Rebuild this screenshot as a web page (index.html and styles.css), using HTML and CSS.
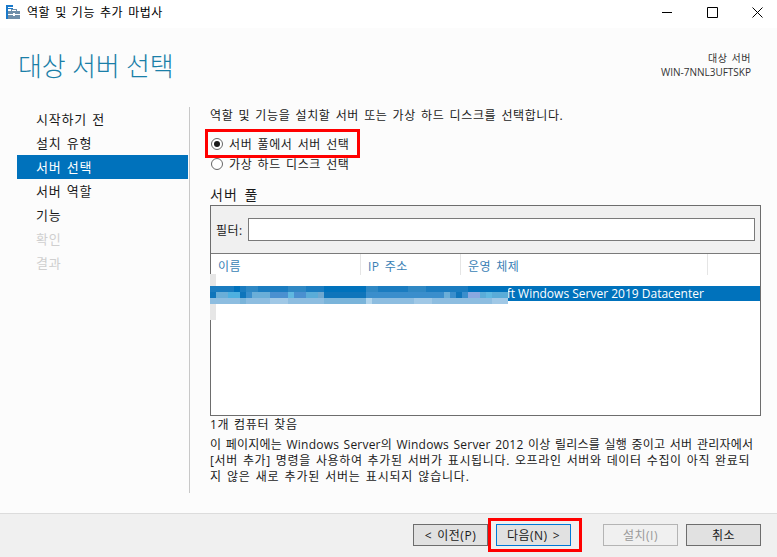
FILE: index.html
```html
<!DOCTYPE html>
<html lang="ko">
<head>
<meta charset="utf-8">
<title>역할 및 기능 추가 마법사</title>
<link rel="stylesheet" href="styles.css">
</head>
<body>
<div class="window">
  <header class="titlebar">
    <svg class="app-icon" width="14" height="14" viewBox="0 0 14 14" shape-rendering="crispEdges"><path fill="#1979ca" d="M0 0h7v2H0zM0 2h2v12H0zM2 3h5v1H2z"/><path fill="#6f8ea8" d="M2 6h12v8H2z"/><path fill="#fff" d="M2 9h12v1H2zM7 8h2v3H7z"/><path fill="none" stroke="#6f8ea8" d="M5.500 6V4.500h5V6"/></svg>
    <span class="title">역할 및 기능 추가 마법사</span>
    <div class="controls">
      <svg width="11" height="11" viewBox="0 0 11 11"><path d="M0 5.500h10" stroke="#000" fill="none"/></svg>
      <svg width="11" height="11" viewBox="0 0 11 11"><path d="M.5.500h10v10H.5z" stroke="#000" fill="none"/></svg>
      <svg width="11" height="11" viewBox="0 0 11 11"><path d="M.5.500l10 10M10.500.500l-10 10" stroke="#000" fill="none"/></svg>
    </div>
  </header>
  <main class="content">
    <div class="banner">
      <h1>대상 서버 선택</h1>
      <div class="target"><div class="target-label">대상 서버</div><div>WIN-7NNL3UFTSKP</div></div>
    </div>
    <div class="columns">
      <nav class="steps">
        <div class="step">시작하기 전</div>
        <div class="step">설치 유형</div>
        <div class="step active">서버 선택</div>
        <div class="step">서버 역할</div>
        <div class="step">기능</div>
        <div class="step off">확인</div>
        <div class="step off">결과</div>
      </nav>
      <section class="main">
        <p class="intro">역할 및 기능을 설치할 서버 또는 가상 하드 디스크를 선택합니다.</p>
        <div class="radios">
          <div class="radio-row"><span class="radio on"></span>서버 풀에서 서버 선택</div>
          <div class="radio-row"><span class="radio"></span>가상 하드 디스크 선택</div>
          <div class="mark mark-radio"></div>
        </div>
        <h2>서버 풀</h2>
        <div class="pool">
          <div class="filter"><label>필터:</label><div class="input"></div></div>
          <div class="thead">
            <div class="th c1">이름</div><div class="th c2">IP 주소</div><div class="th c3">운영 체제</div><div class="th c4"></div>
          </div>
          <div class="tbody">
            <div class="row"><span class="os">Microsoft Windows Server 2019 Datacenter</span></div>
            <svg class="mosaic" width="298" height="46" viewBox="0 0 298 46" shape-rendering="crispEdges">
              <rect x="0" y="0" width="6" height="46" fill="#e6e6e6"/>
              <rect x="0" y="12" width="298" height="6" fill="#1a7cc0"/>
              <path fill="#0072bc" d="M114 12h42v6h-42zM24 12h6v6h-6zM258 12h40v6h-40z"/>
              <path fill="#2f88c4" d="M78 12h18v6H78zM156 12h12v6h-12zM198 12h18v6h-18zM36 12h12v6H36z"/>
              <rect x="0" y="18" width="298" height="6" fill="#3a8ecc"/>
              <path fill="#0f75bb" d="M0 18h6v6H0zM30 18h6v6h-6zM114 18h42v6h-42zM246 18h6v6h-6z"/>
              <path fill="#6aaed8" d="M6 18h12v6H6zM42 18h18v6H42zM234 18h6v6h-6z"/>
              <path fill="#4eb0e0" d="M18 18h12v6H18z"/>
              <path fill="#4a90d0" d="M60 18h18v6H60zM84 18h12v6H84z"/>
              <path fill="#60b8e0" d="M78 18h6v6h-6zM276 18h6v6h-6z"/>
              <path fill="#5aacd8" d="M96 18h12v6H96zM270 18h6v6h-6zM282 18h16v6h-16z"/>
              <path fill="#6ea8d0" d="M108 18h6v6h-6z"/>
              <path fill="#8aa8e0" d="M258 18h12v6h-12z"/>
              <rect x="0" y="24" width="298" height="6" fill="#8dbde0"/>
              <path fill="#a0c8e6" d="M60 24h18v6H60zM204 24h18v6h-18zM282 24h16v6h-16z"/>
              <path fill="#7ab4da" d="M114 24h42v6h-42zM30 24h6v6h-6z"/>
              <path fill="#b0d4ec" d="M156 24h6v6h-6z"/>
            </svg>
          </div>
        </div>
        <div class="found">1개 컴퓨터 찾음</div>
        <p class="note">
          <span class="line line-1">이 페이지에는 Windows Server의 Windows Server 2012 이상 릴리스를 실행 중이고 서버 관리자에서</span>
          <span class="line line-2">[서버 추가] 명령을 사용하여 추가된 서버가 표시됩니다. 오프라인 서버와 데이터 수집이 아직 완료되</span>
          <span class="line line-3">지 않은 새로 추가된 서버는 표시되지 않습니다.</span>
        </p>
      </section>
    </div>
  </main>
  <footer class="footer">
    <button class="btn">&lt; 이전(P)</button>
    <button class="btn primary">다음(N) &gt;<span class="mark mark-btn"></span></button>
    <button class="btn disabled">설치(I)</button>
    <button class="btn">취소</button>
  </footer>
</div>
</body>
</html>
```
FILE: styles.css
```css
* { box-sizing: border-box; }
html, body { margin: 0; padding: 0; }
body { width: 777px; height: 557px; overflow: hidden; font-family: "Open Sans", "Noto Sans CJK KR", sans-serif; font-size: 12px; color: #1a1a1a; }
.window { width: 777px; height: 557px; display: flex; flex-direction: column; background: #fff; }
.titlebar { height: 28px; flex: none; display: flex; align-items: flex-start; padding: 5px 0 0 6px; background: #fff; }
.app-icon { flex: none; }
.title { margin: 0 0 0 7px; font-size: 12px; line-height: 15px; color: #000; letter-spacing: .5px; word-spacing: 1.5px; }
.controls { margin-left: auto; display: flex; gap: 34px; padding: 2px 14px 0 0; }
.controls svg { display: block; }
.content { flex: 1; background: #fcfcfc; display: flex; flex-direction: column; min-height: 0; }
.banner { height: 79px; flex: none; display: flex; justify-content: space-between; padding: 20px 26px 0 18px; }
h1 { margin: 0; font-size: 26px; line-height: 36px; font-weight: 300; color: #1a7fa8; letter-spacing: -.2px; }
.target { text-align: right; font-size: 10px; line-height: 14px; color: #333; padding-top: 3px; }
.target-label { letter-spacing: .5px; word-spacing: 1px; }
.columns { flex: 1; display: flex; min-height: 0; }
.steps { width: 171px; flex: none; margin: 0 1px 0 17px; }
.step { height: 24px; line-height: 24px; padding-left: 19px; font-size: 13px; letter-spacing: .8px; word-spacing: 1px; }
.step.active { background: #0072bc; color: #fff; }
.step.off { color: #cfcfcf; }
.main { width: 572px; margin-bottom: 20px; border-left: 1px solid #c8c8c8; padding: 1px 0 0 20px; display: flex; flex-direction: column; }
.intro { margin: 0; height: 24px; line-height: 16px; letter-spacing: .6px; word-spacing: 1.5px; }
.radios { position: relative; margin-top: 2px; }
.radio-row { height: 20px; display: flex; align-items: center; gap: 6px; letter-spacing: .6px; word-spacing: 1.5px; }
.radio { width: 12px; height: 12px; border: 1px solid #666; border-radius: 50%; background: #fff; margin-left: 1px; position: relative; flex: none; }
.radio.on::after { content: ""; position: absolute; left: 2px; top: 2px; width: 6px; height: 6px; border-radius: 50%; background: #1a1a1a; }
.mark { position: absolute; border: 3px solid #f00; pointer-events: none; }
.mark-radio { left: -5px; top: -5px; width: 155px; height: 29px; }
h2 { margin: 11px 0 0; font-size: 14px; line-height: 20px; font-weight: 400; height: 20px; letter-spacing: 1px; word-spacing: 2px; }
.pool { width: 551px; height: 211px; border: 1px solid #6d6d6d; display: flex; flex-direction: column; background: #fff; flex: none; }
.filter { height: 48px; flex: none; background: #f0f0f0; border-bottom: 1px solid #7a7a7a; display: flex; align-items: center; padding: 0 5px 0 5px; }
.filter label { width: 32px; flex: none; letter-spacing: .4px; }
.input { flex: 1; height: 23px; background: #fff; border: 1px solid #7a7a7a; }
.thead { height: 21px; flex: none; display: flex; }
.th { color: #3a7fb5; border-right: 1px solid #e5e5e5; padding-left: 7px; line-height: 25px; letter-spacing: .5px; word-spacing: 1.5px; }
.c1 { width: 150px; } .c2 { width: 100px; } .c3 { width: 247px; } .c4 { flex: 1; border-right: 0; }
.tbody { position: relative; flex: 1; padding-top: 11px; }
.row { height: 15px; background: #0072bc; color: #fff; line-height: 16px; padding-left: 251px; white-space: nowrap; }
.mosaic { position: absolute; left: -1px; top: -1px; }
.found { margin-top: 1px; line-height: 16px; height: 18px; letter-spacing: .7px; word-spacing: 1px; }
.note { margin: 2px 0 0; width: 548px; line-height: 16px; }
.line { display: block; height: 16px; white-space: nowrap; }
.line-1 { letter-spacing: .21px; word-spacing: 1.2px; }
.line-2 { letter-spacing: .65px; word-spacing: 1.2px; }
.line-3 { letter-spacing: .8px; word-spacing: 1.2px; }
.footer { height: 44px; flex: none; background: #f0f0f0; border-top: 1px solid #dcdcdc; display: flex; padding: 10px 0 0 413px; }
.btn { position: relative; width: 75px; height: 22px; padding: 0; border: 1px solid #6d6d6d; background: #e1e1e1; font: 12px "Open Sans", "Noto Sans CJK KR", sans-serif; letter-spacing: .5px; word-spacing: 1.5px; color: #1a1a1a; margin-right: 8px; }
.btn.primary { border-color: #0078d7; margin-right: 32px; }
.btn.disabled { border-color: #b4b4b4; background: #f0f0f0; color: #999; }
.btn:last-child { margin-right: 0; }
.mark-btn { left: -9px; top: -7px; width: 94px; height: 34px; }
```
